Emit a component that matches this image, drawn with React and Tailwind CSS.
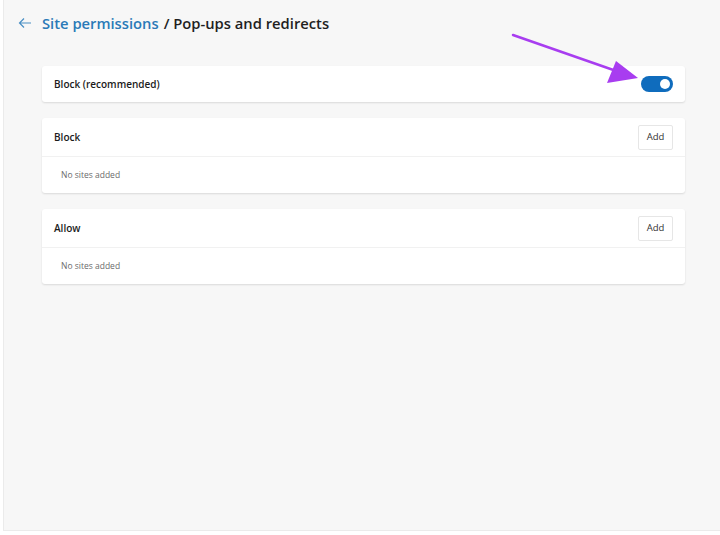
import React from "react";

const font = { fontFamily: '"Open Sans", "Noto Sans", sans-serif' };

const Toggle = () => (
  <div className="w-[32px] h-[16px] rounded-full bg-[#0f6cbd] flex items-center justify-end pr-[3px]">
    <div className="w-[10px] h-[10px] rounded-full bg-white" />
  </div>
);

const SiteList = ({ title }) => (
  <div className="bg-white rounded-[3px] shadow-[0_1px_2px_rgba(0,0,0,0.12)]">
    <div className="h-[39px] flex items-center justify-between pl-[12px] pr-[12px] border-b border-[#f1f1f1]">
      <span className="text-[10px] font-semibold text-[#1b1b1b]">{title}</span>
      <button className="h-[25px] w-[35px] border border-[#e6e6e6] rounded-[2px] bg-white text-[9.5px] text-[#333]">
        Add
      </button>
    </div>
    <div className="h-[36px] flex items-center pl-[19px] text-[8.5px] text-[#6b6b6b]">
      No sites added
    </div>
  </div>
);

export default function App() {
  return (
    <div style={font} className="w-[720px] h-[535px] bg-white relative overflow-hidden">
      <div className="ml-[3px] w-[717px] h-[531px] bg-[#f7f7f7] border-l border-b border-[#ebebeb]">
        <div className="flex items-center pt-[12px] pl-[14px] h-[34px]">
          <svg width="14" height="12" viewBox="0 0 14 12" className="mr-[10px]">
            <path d="M13 6H1.5M6 1.5L1.5 6L6 10.5" fill="none" stroke="#4a8fc4" strokeWidth="1.2" />
          </svg>
          <span className="text-[14.75px] font-semibold text-[#2a7ab8]">Site permissions</span>
          <span className="text-[14.75px] font-semibold text-[#1f1f1f] ml-[5px]">/ Pop-ups and redirects</span>
        </div>

        <div className="pl-[38px] pr-[35px] pt-[32px] flex flex-col gap-[16px]">
          <div className="h-[36px] bg-white rounded-[3px] shadow-[0_1px_2px_rgba(0,0,0,0.12)] flex items-center justify-between pl-[12px] pr-[12px]">
            <span className="text-[10px] font-semibold text-[#1b1b1b]">Block (recommended)</span>
            <Toggle />
          </div>
          <SiteList title="Block" />
          <SiteList title="Allow" />
        </div>
      </div>

      <svg className="absolute left-0 top-0 pointer-events-none" width="720" height="535">
        <line x1="513" y1="35" x2="622" y2="73" stroke="#a83df0" strokeWidth="2.5" strokeLinecap="round" />
        <polygon points="638,78 607,83 616,61" fill="#a83df0" />
      </svg>
    </div>
  );
}
